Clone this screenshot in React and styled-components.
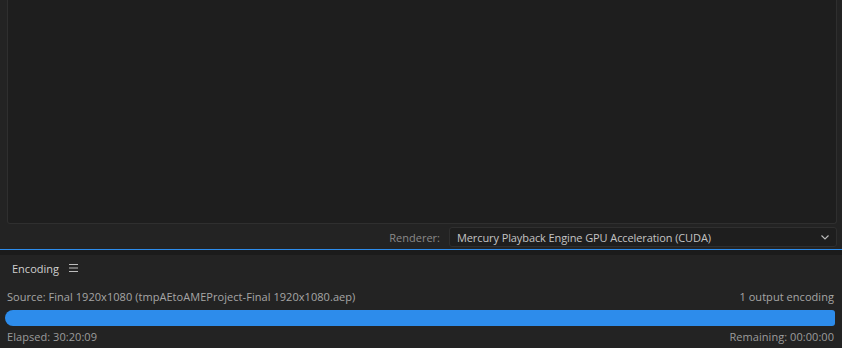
import React from "react";
import styled, { createGlobalStyle } from "styled-components";

const Global = createGlobalStyle`
  html, body { margin: 0; padding: 0; background: #232323; }
  body { font-family: "Open Sans", "Noto Sans", sans-serif; }
  * { box-sizing: border-box; }
`;

const Page = styled.div`
  width: 842px;
  height: 348px;
  display: flex;
  flex-direction: column;
  background: #232323;
  overflow: hidden;
`;

const Upper = styled.div`
  display: flex;
  flex-direction: column;
  padding: 0 5px 0 7px;
  height: 249px;
`;

const Preview = styled.div`
  height: 224px;
  background: #1e1e1e;
  border: 1px solid #2f2f2f;
  border-top: none;
  border-radius: 0 0 3px 3px;
`;

const RendererRow = styled.div`
  display: flex;
  justify-content: flex-end;
  align-items: center;
  gap: 9px;
  margin-top: 3px;
`;

const Label = styled.span`
  font-size: 11px;
  color: #8a8a8a;
`;

const Select = styled.div`
  width: 388px;
  height: 20px;
  display: flex;
  align-items: center;
  justify-content: space-between;
  padding: 0 7px 0 7px;
  background: #1e1e1e;
  border: 1px solid #2f2f2f;
  border-radius: 3px;
  font-size: 11px;
  letter-spacing: -0.1px;
  color: #c4c4c4;
`;

const Divider = styled.div`
  height: 1px;
  background: #2d8ceb;
`;

const Gap = styled.div`
  height: 5px;
  background: #1b1b1b;
`;

const Lower = styled.div`
  flex: 1;
  display: flex;
  flex-direction: column;
  padding: 0 7px 0 5px;
`;

const Header = styled.div`
  display: flex;
  align-items: center;
  gap: 10px;
  height: 26px;
  padding-left: 7px;
  font-size: 11px;
  color: #cfcfcf;
`;

const InfoRow = styled.div`
  display: flex;
  justify-content: space-between;
  font-size: 11px;
  letter-spacing: 0.05px;
  color: ${(p) => p.$color || "#9c9c9c"};
  padding: 0 1px 0 2px;
  line-height: 16px;
  margin-top: ${(p) => p.$top || 0}px;
`;

const Bar = styled.div`
  height: 16px;
  margin-top: 5px;
  background: #2d8ceb;
  border-radius: 8px 3px 3px 8px;
`;

const Chevron = () => (
  <svg width="8" height="5" viewBox="0 0 8 5">
    <path d="M0.5 0.5 L4 4 L7.5 0.5" fill="none" stroke="#bdbdbd" strokeWidth="1.1" />
  </svg>
);

const Menu = () => (
  <svg width="9" height="8" viewBox="0 0 9 8">
    <path d="M0 0.5H9M0 4H9M0 7.5H9" stroke="#bdbdbd" strokeWidth="1" />
  </svg>
);

export default function App() {
  return (
    <Page>
      <Global />
      <Upper>
        <Preview />
        <RendererRow>
          <Label>Renderer:</Label>
          <Select>
            <span>Mercury Playback Engine GPU Acceleration (CUDA)</span>
            <Chevron />
          </Select>
        </RendererRow>
      </Upper>
      <Divider />
      <Gap />
      <Lower>
        <Header>
          <span>Encoding</span>
          <Menu />
        </Header>
        <InfoRow $color="#a6a6a6" $top={8}>
          <span>Source: Final 1920x1080 (tmpAEtoAMEProject-Final 1920x1080.aep)</span>
          <span>1 output encoding</span>
        </InfoRow>
        <Bar />
        <InfoRow $top={3}>
          <span>Elapsed: 30:20:09</span>
          <span>Remaining: 00:00:00</span>
        </InfoRow>
      </Lower>
    </Page>
  );
}
